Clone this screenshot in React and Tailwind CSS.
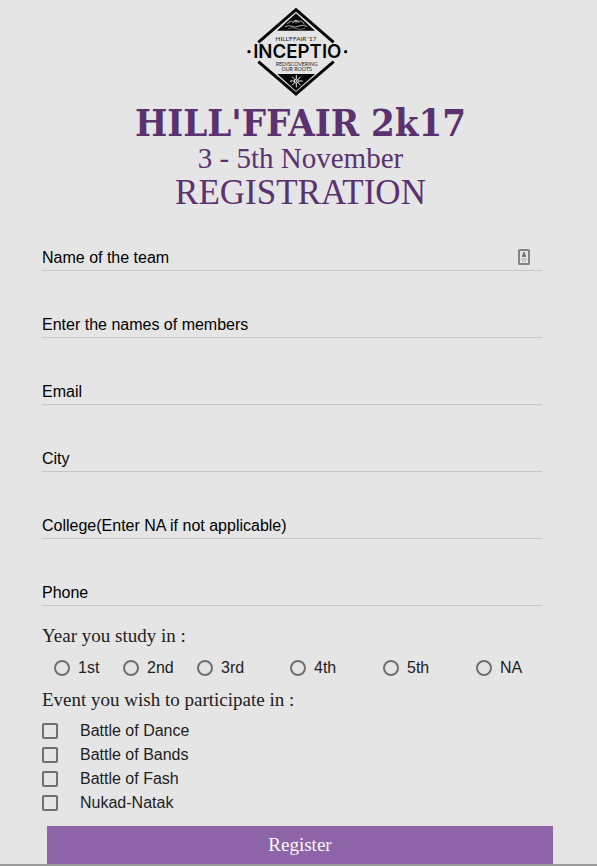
const fields = [
  { id: 'team', label: 'Name of the team', type: 'text', badge: true },
  { id: 'members', label: 'Enter the names of members', type: 'text' },
  { id: 'email', label: 'Email', type: 'email' },
  { id: 'city', label: 'City', type: 'text' },
  { id: 'college', label: 'College(Enter NA if not applicable)', type: 'text' },
  { id: 'phone', label: 'Phone', type: 'tel' },
];
const years = ['1st', '2nd', '3rd', '4th', '5th', 'NA'];
const events = ['Battle of Dance', 'Battle of Bands', 'Battle of Fash', 'Nukad-Natak'];

function Logo() {
  return (
    <svg viewBox="18 24 324 264" className="h-[88px] w-[108px]" fontFamily="Lato, sans-serif" textAnchor="middle" aria-label="Inceptio">
      <path d="M52 127 L165 29 L278 127" fill="none" stroke="#080808" strokeWidth="9" />
      <path d="M52 185 L165 282 L278 185" fill="none" stroke="#080808" strokeWidth="9" />
      <path d="M165 40 L222 92 H108 Z" fill="#080808" />
      <path d="M109 222 H222 L165 273 Z" fill="#080808" />
      <g fill="none" stroke="#c9c9c9" strokeWidth="2.5">
        <path d="M139 72 Q148 58 157 68 Q164 56 171 67 Q181 57 190 73" />
        <path d="M132 80 Q143 74 153 79 T174 78 T198 80" />
        <path d="M141 86 Q155 80 167 86 T192 85" stroke="#777" />
        <path d="M157 63 H174 M165 59 V70" />
      </g>
      <g stroke="#e5e5e5" strokeWidth="3">
        <path d="M166 225 V262 M147 243 H185 M153 230 L179 256 M179 230 L153 256" />
        <circle cx="166" cy="243" r="6" fill="#080808" />
        <circle cx="166" cy="243" r="1.5" fill="#e5e5e5" />
      </g>
      <text x="165" y="122" fontSize="19" fill="#222">HILL'FFAIR '17</text>
      <text x="169" y="174" fontSize="56" fontWeight="600" fontFamily="Inter, sans-serif" fill="#080808">INCEPTIO</text>
      <text x="167" y="197" fontSize="16" fill="#222">REDISCOVERING</text>
      <text x="167" y="214" fontSize="16" fill="#222">OUR ROOTS</text>
      <circle cx="24" cy="155" r="5" fill="#080808" />
      <circle cx="314" cy="155" r="5" fill="#080808" />
    </svg>
  );
}

function ContactBadge() {
  return (
    <svg viewBox="0 0 12 16" className="absolute right-3 bottom-1.5 h-4 w-3" aria-hidden="true">
      <rect x="1" y="1" width="10" height="14" rx="0.5" fill="#e5e5e5" stroke="#858585" strokeWidth="2" />
      <path d="M5 3 H7 V5 L8 6 V8 H4 V6 L5 5 Z" fill="#777" />
      <path d="M3 10 H9 M4 12 H8" stroke="#aaa" />
    </svg>
  );
}

export default function App() {
  return (
    <main className="border-b-2 border-[#9b9b9b] bg-[#e5e5e5] font-['Liberation_Sans',Arial,sans-serif] text-base text-[#212121]">
      <header className="flex flex-col items-center pt-2 pl-1 font-['Liberation_Serif',serif] text-[#5b3270]">
        <Logo />
        <h1 className="font-['DejaVu_Serif_Condensed','DejaVu_Serif',serif] text-[38px] leading-[54px] font-bold">HILL'FFAIR 2k17</h1>
        <h2 className="text-[29px] leading-4">3 - 5th November</h2>
        <h3 className="text-[35px] leading-[54px]">REGISTRATION</h3>
      </header>
      <form className="pt-[11px]">
        <div className="flex flex-col gap-[27px] pr-[55px] pl-[42px]">
          {fields.map((f) => (
            <div key={f.id} className="relative">
              <input id={f.id} name={f.id} type={f.type} className="block h-10 w-full border-b border-[#c6c6c6] bg-transparent outline-none" />
              <label htmlFor={f.id} className="absolute bottom-px left-0 leading-6 text-black">{f.label}</label>
              {f.badge && <ContactBadge />}
            </div>
          ))}
        </div>
        <fieldset className="pt-4 pr-3 pl-[42px]">
          <legend className="contents font-['Liberation_Serif',serif] text-[19px] leading-7">Year you study in :</legend>
          <div className="grid grid-cols-[69px_74px_93px_93px_93px_auto] pt-1.5 pl-3">
            {years.map((y) => (
              <label key={y} className="flex h-6 items-center gap-2">
                <input type="radio" name="year" value={y} className="size-4 appearance-none rounded-full border-2 border-[#707070] checked:bg-[#5b3270]" />
                {y}
              </label>
            ))}
          </div>
        </fieldset>
        <fieldset className="pt-1.5 pl-[42px]">
          <legend className="contents font-['Liberation_Serif',serif] text-[19px] leading-7">Event you wish to participate in :</legend>
          <div className="flex flex-col items-start pt-[5px]">
            {events.map((e) => (
              <label key={e} className="flex h-6 items-center gap-[22px]">
                <input type="checkbox" name="events" value={e} className="size-4 appearance-none rounded-xs border-2 border-[#707070] checked:bg-[#5b3270]" />
                {e}
              </label>
            ))}
          </div>
        </fieldset>
        <div className="pt-[11px] pr-11 pl-[47px]">
          <button type="submit" className="block h-[38px] w-full bg-[#8d64a8] font-['Liberation_Serif',serif] text-[19px] text-[#fafafa]">Register</button>
        </div>
      </form>
    </main>
  );
}
